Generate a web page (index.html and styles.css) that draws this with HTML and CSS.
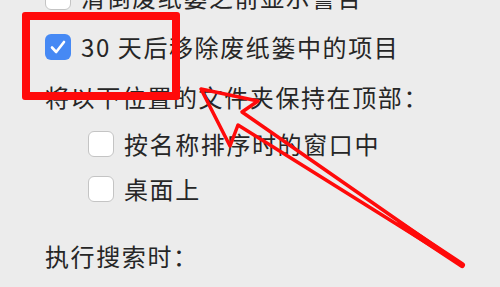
FILE: index.html
```html
<!DOCTYPE html>
<html lang="zh-CN">
  <head>
    <meta charset="UTF-8">
    <meta name="viewport" content="width=device-width, initial-scale=1.0">
    <title>Finder 偏好设置</title>
    <link rel="stylesheet" href="styles.css">
  </head>
  <body>
    <div class="prefs">
      <label class="row row-first">
        <span class="box"></span>
        <span>清倒废纸篓之前显示警告</span>
      </label>

      <label class="row row-gap">
        <span class="box checked">
          <svg viewBox="0 0 26 26" width="26" height="26">
            <path d="M7 13.5 L11.2 18 L19 8" fill="none" stroke="#fff" stroke-width="2.6" stroke-linecap="round" stroke-linejoin="round" />
          </svg>
        </span>
        <span>30 天后移除废纸篓中的项目</span>
      </label>

      <div class="row heading row-gap">将以下位置的文件夹保持在顶部：</div>

      <label class="row sub row-mid">
        <span class="box"></span>
        <span>按名称排序时的窗口中</span>
      </label>

      <label class="row sub row-tight">
        <span class="box"></span>
        <span>桌面上</span>
      </label>

      <div class="row heading row-wide">执行搜索时：</div>
    </div>

    <!-- annotation on top of the screenshot -->
    <div class="mark-box"></div>
    <svg class="mark-arrow" width="500" height="287" viewBox="0 0 500 287">
      <polygon points="201,89 258,101 242,112 462,265 238,125 230,146"
        fill="none" stroke="#ff0a0a" stroke-width="3.5" stroke-linejoin="round" />
      <line x1="400" y1="224" x2="462" y2="265" stroke="#ff0a0a" stroke-width="6" stroke-linecap="round" />
    </svg>
  </body>
</html>
```

FILE: styles.css
```css
body {
  margin: 0;
  background-color: #ececec;
  font-family: "Noto Sans CJK SC", "Noto Sans", sans-serif;
  color: #262626;
  overflow: hidden;
}

.prefs {
  display: flex;
  flex-direction: column;
  padding-left: 45px;
  margin-top: -18px;
}

.row {
  display: flex;
  align-items: center;
  gap: 10px;
  height: 30px;
  font-size: 24px;
  line-height: 30px;
  letter-spacing: 1.6px;
  white-space: nowrap;
}

.row-gap {
  margin-top: 20px;
}

.row-mid {
  margin-top: 17px;
}

.row-tight {
  margin-top: 15px;
}

.row-wide {
  margin-top: 37px;
}

.sub {
  padding-left: 43px;
}

.box {
  box-sizing: border-box;
  flex: none;
  width: 26px;
  height: 26px;
  border: 1px solid #c4c4c4;
  border-radius: 6px;
  background-color: #fff;
}

.box.checked {
  border: none;
  background-color: #4689f4;
}

.box svg {
  display: block;
}

.mark-box {
  position: absolute;
  left: 22px;
  top: 12px;
  width: 142px;
  height: 72px;
  border: 8px solid #ff0a0a;
  border-radius: 3px;
}

.mark-arrow {
  position: absolute;
  left: 0;
  top: 0;
}
```
